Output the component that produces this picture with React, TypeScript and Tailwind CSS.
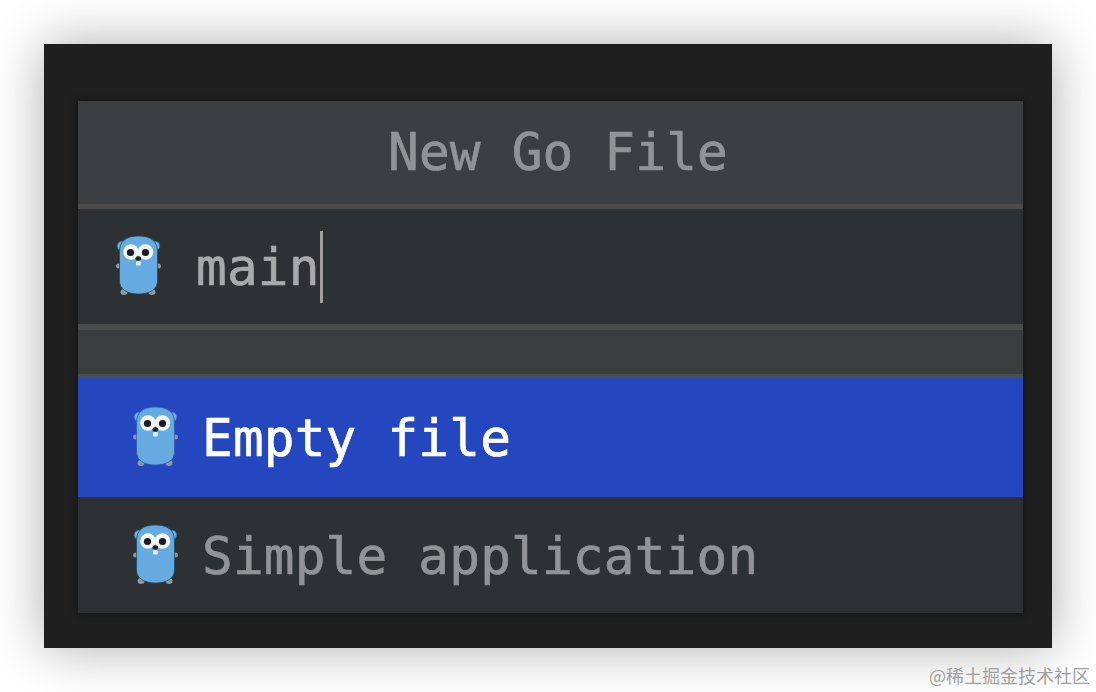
import React from "react";

const mono = "font-['DejaVu_Sans_Mono',monospace]";

function Gopher({ selected = false }: { selected?: boolean }) {
  const outline = selected ? "#2f55b8" : "#1d4a66";
  return (
    <svg width="45" height="60" viewBox="0 0 45 60" className="mb-[3px] shrink-0">
      {/* ears */}
      <circle cx="6" cy="11" r="5" fill="#6aaedd" stroke={outline} strokeWidth="0.8" />
      <circle cx="39" cy="11" r="5" fill="#6aaedd" stroke={outline} strokeWidth="0.8" />
      {/* arms + feet */}
      <ellipse cx="3" cy="31" rx="3" ry="2.500" fill="#8a9aa3" />
      <ellipse cx="42" cy="31" rx="3" ry="2.500" fill="#8a9aa3" />
      <ellipse cx="8" cy="57" rx="3.500" ry="3" fill="#8a9aa3" />
      <ellipse cx="36" cy="57" rx="3.500" ry="3" fill="#8a9aa3" />
      {/* body */}
      <path
        d="M22.500 1C10 1 3.500 6 3.500 17V46C3.500 54 11 59 22.500 59C34 59 41.500 54 41.500 46V17C41.500 6 35 1 22.500 1Z"
        fill="#66abe0"
        stroke={outline}
        strokeWidth="0.8"
      />
      {/* eyes */}
      <circle cx="15" cy="17" r="7.800" fill="#f4f6f8" />
      <circle cx="29.500" cy="17" r="7.800" fill="#f4f6f8" />
      <circle cx="14.500" cy="17.500" r="3.600" fill="#1b1b22" />
      <circle cx="29.500" cy="17.500" r="3.600" fill="#1b1b22" />
      {/* nose + teeth */}
      <ellipse cx="22.300" cy="23.500" rx="2.800" ry="2.200" fill="#23242a" />
      <rect x="20" y="26" width="4.800" height="4.500" rx="1" fill="#e8edf0" />
    </svg>
  );
}

export default function App() {
  return (
    <div className="h-[692px] w-[1096px] overflow-hidden bg-white">
      <div className="ml-[44px] mt-[44px] h-[604px] w-[1008px] bg-[#1f1f1f] px-[34px] pt-[57px] shadow-[0_0_50px_rgba(0,0,0,0.32)]">
        <div className={`w-[945px] ${mono} text-[51px] tracking-[0.2px] blur-[0.5px] [-webkit-text-stroke:0.7px_currentColor] shadow-[0_0_6px_rgba(0,0,0,0.5)]`}>
          {/* Title */}
          <div className="flex h-[103px] items-center justify-center bg-[#3c3f42] pl-[15px] pt-[2px] text-[#919395]">
            New Go File
          </div>
          <div className="h-[5px] bg-[#4b4b4b]" />

          {/* Input */}
          <div className="flex h-[115px] items-center gap-[35px] bg-[#2e3134] pl-[38px] text-[#a8a9aa]">
            <Gopher />
            <div className="flex items-center">
              <span className="mt-[4px]">main</span>
              <span className="h-[72px] w-[3px] bg-[#a0a0a0]" />
            </div>
          </div>
          <div className="h-[6px] bg-[#4b4b4b]" />

          {/* Empty strip */}
          <div className="h-[44px] bg-[#3a3c3e]" />
          <div className="h-[4px] bg-[#4c4c48]" />

          {/* Results */}
          <div className="flex h-[119px] items-center gap-[24px] bg-[#2447bf] pl-[55px] text-white">
            <Gopher selected />
            <span className="mt-[4px]">Empty file</span>
          </div>
          <div className="flex h-[116px] items-center gap-[24px] bg-[#2e3134] pl-[55px] text-[#919395]">
            <Gopher />
            <span className="mt-[4px]">Simple application</span>
          </div>
        </div>
      </div>

      <div className="flex justify-end pr-[6px] pt-[15px] font-['Noto_Sans_CJK_SC',sans-serif] text-[18px] leading-[24px] text-[#a0a0a0]">
        @稀土掘金技术社区
      </div>
    </div>
  );
}
